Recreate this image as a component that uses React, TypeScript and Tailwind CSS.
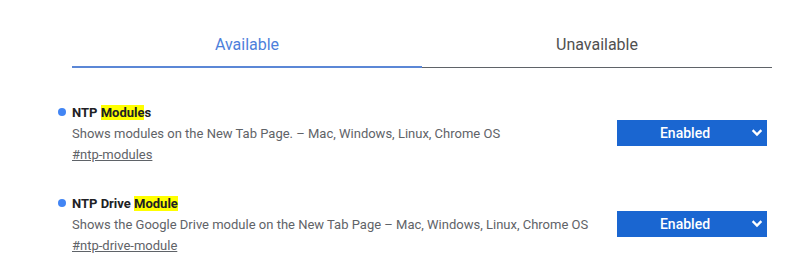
import { useState } from 'react';

type Flag = {
  pre: string;
  hit: string;
  post: string;
  desc: string;
  hash: string;
};

const flags: Flag[] = [
  {
    pre: 'NTP ',
    hit: 'Module',
    post: 's',
    desc: 'Shows modules on the New Tab Page. – Mac, Windows, Linux, Chrome OS',
    hash: '#ntp-modules',
  },
  {
    pre: 'NTP Drive ',
    hit: 'Module',
    post: '',
    desc: 'Shows the Google Drive module on the New Tab Page – Mac, Windows, Linux, Chrome OS',
    hash: '#ntp-drive-module',
  },
];

function FlagRow({ flag }: { flag: Flag }) {
  return (
    <div className="flex items-start justify-between h-[91px]">
      <div className="relative">
        <span className="absolute left-[-14px] top-[5px] w-[8px] h-[8px] rounded-full bg-[#4285f4]" />
        <div className="text-[13px] leading-[20px] font-bold text-[#202124]">
          {flag.pre}
          <span className="bg-[#ffff00]">{flag.hit}</span>
          {flag.post}
        </div>
        <div className="text-[13px] leading-[20px] text-[#5f6368] mt-px">{flag.desc}</div>
        <a className="block text-[13px] leading-[20px] text-[#5f6368] underline mt-px">{flag.hash}</a>
      </div>
      <button className="mt-[17px] w-[150px] h-[26px] bg-[#1a66d1] text-white text-[14px] font-medium relative flex items-center justify-center pr-[14px]">
        Enabled
        <svg
          className="absolute right-[4px] top-[9px]"
          width="12"
          height="8"
          viewBox="0 0 12 8"
          fill="none"
          stroke="white"
          strokeWidth="2.4"
          strokeLinecap="square"
        >
          <path d="M2.5 2 L6 5.5 L9.5 2" />
        </svg>
      </button>
    </div>
  );
}

export default function App() {
  const [tab, setTab] = useState(0);

  return (
    <div className="w-[794px] h-[276px] bg-white font-['Roboto',sans-serif]">
      <div className="ml-[72px] w-[700px] pt-[24px]">
        <div className="flex border-b border-[#5f6368] h-[44px]">
          {['Available', 'Unavailable'].map((t, i) => (
            <button
              key={t}
              onClick={() => setTab(i)}
              className={`flex-1 text-[16px] pb-px ${
                tab === i ? 'text-[#4d7fdb] border-b-2 border-[#5b87d6] -mb-px' : 'text-[#505050]'
              }`}
            >
              {t}
            </button>
          ))}
        </div>
        <div className="pt-[35px] pr-[5px]">
          {flags.map((f) => (
            <FlagRow key={f.hash} flag={f} />
          ))}
        </div>
      </div>
    </div>
  );
}
